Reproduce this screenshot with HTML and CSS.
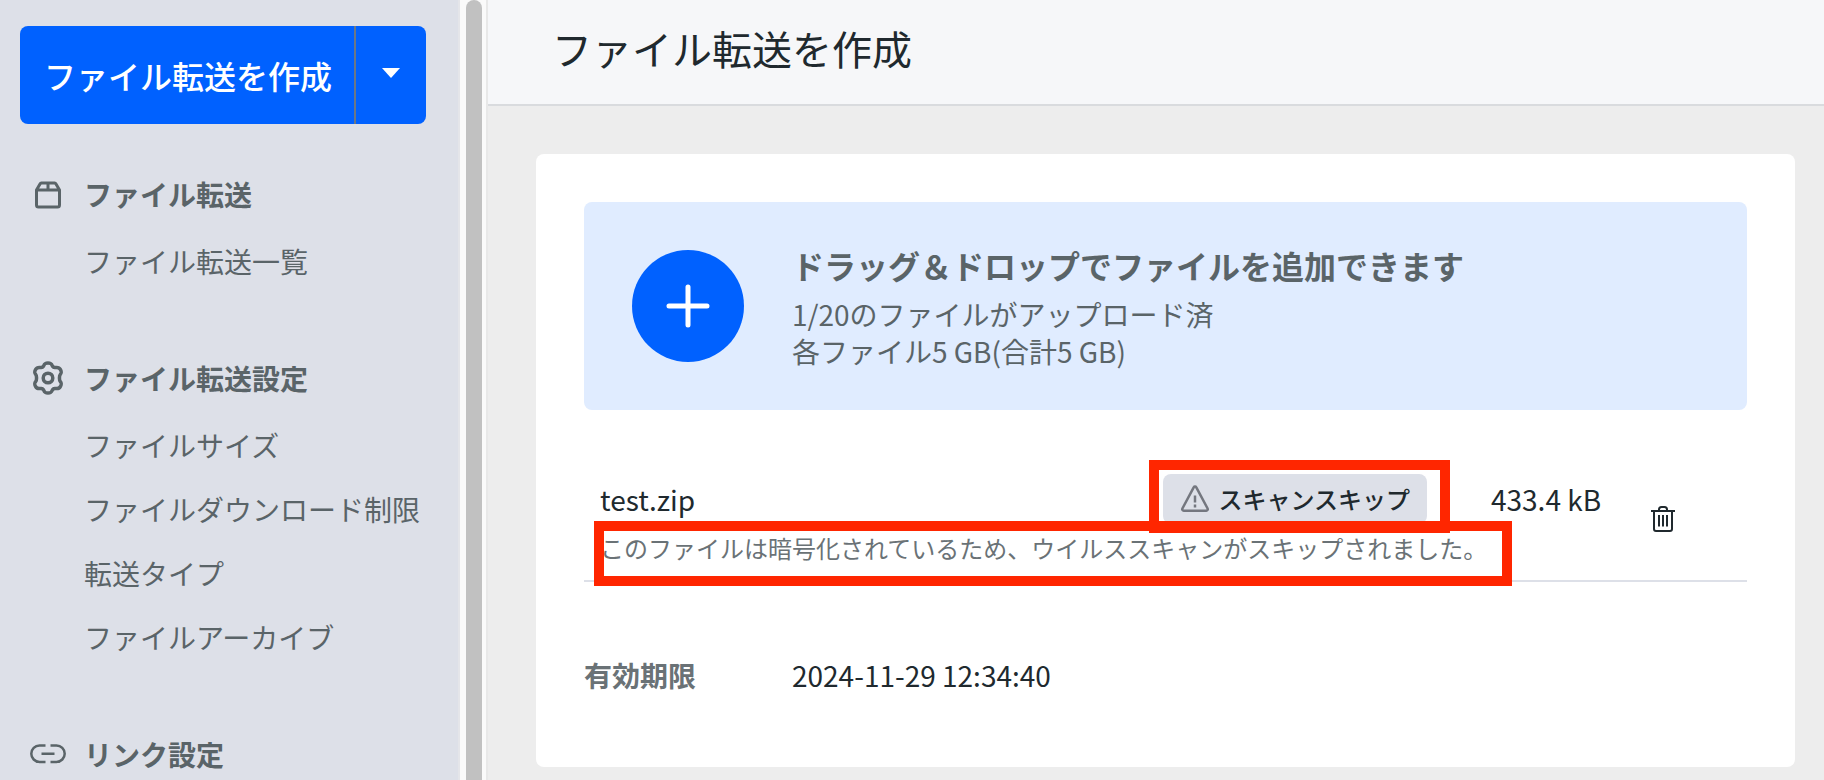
FILE: index.html
```html
<!DOCTYPE html>
<html lang="ja">
<head>
<meta charset="utf-8">
<title>ファイル転送を作成</title>
<link rel="stylesheet" href="styles.css">
</head>
<body>
<div class="app">
  <aside class="sidebar">
    <div class="split-button">
      <button class="split-main" type="button">ファイル転送を作成</button>
      <button class="split-toggle" type="button" aria-label="その他">
        <svg width="18" height="10" viewBox="0 0 18 10"><path d="M0 0h18L9 10z" fill="#fff"/></svg>
      </button>
    </div>
    <nav class="nav">
      <section class="nav-group">
        <h2 class="nav-heading">
          <svg class="nav-icon" width="36" height="36" viewBox="0 0 36 36" fill="none" stroke="#5a6468" stroke-width="3" stroke-linejoin="round"><path d="M6.500 14v15a2 2 0 0 0 2 2h19a2 2 0 0 0 2-2V14l-3.500-6a2 2 0 0 0-1.500-1H11.500a2 2 0 0 0-1.500 1zM6.500 14h23M18 7v7"/></svg>
          <span>ファイル転送</span>
        </h2>
        <a class="nav-link" href="#">ファイル転送一覧</a>
      </section>
      <section class="nav-group">
        <h2 class="nav-heading">
          <svg class="nav-icon" width="36" height="36" viewBox="0 0 36 36" fill="none" stroke="#5a6468" stroke-width="3.500" stroke-linejoin="round"><path d="M18 3c3 0 3.500.8 4.200 2.600.6 1.500 1.700 2.100 3.300 1.900 2-.3 3.600-.4 5 2.200s1 3.400-.3 4.900c-1 1.200-1 5.600 0 6.800 1.300 1.500 1.700 2.300.3 4.900s-3 2.500-5 2.200c-1.600-.2-2.700.4-3.300 1.900C21.500 32.200 21 33 18 33s-3.500-.8-4.200-2.600c-.6-1.500-1.700-2.100-3.300-1.900-2 .3-3.600.4-5-2.200s-1-3.400.3-4.900c1-1.200 1-5.600 0-6.800-1.300-1.500-1.700-2.300-.3-4.900s3-2.500 5-2.200c1.600.2 2.700-.4 3.300-1.900C14.500 3.800 15 3 18 3z"/><circle cx="18" cy="18" r="4.800"/></svg>
          <span>ファイル転送設定</span>
        </h2>
        <a class="nav-link" href="#">ファイルサイズ</a>
        <a class="nav-link" href="#">ファイルダウンロード制限</a>
        <a class="nav-link" href="#">転送タイプ</a>
        <a class="nav-link" href="#">ファイルアーカイブ</a>
      </section>
      <section class="nav-group">
        <h2 class="nav-heading">
          <svg class="nav-icon" width="36" height="36" viewBox="0 0 36 36" fill="none" stroke="#5a6468" stroke-width="2.500"><path d="M15.500 9.500H9.500a8.200 8.200 0 0 0 0 16.400h6M20.500 9.500h6a8.200 8.200 0 0 1 0 16.400h-6M11.500 17.700h13"/></svg>
          <span>リンク設定</span>
        </h2>
      </section>
    </nav>
  </aside>
  <div class="scroll-track"><div class="scroll-thumb"></div></div>
  <main class="main">
    <header class="page-header"><h1 class="page-title">ファイル転送を作成</h1></header>
    <div class="card">
      <div class="dropzone">
        <button class="add-button" type="button" aria-label="ファイルを追加">
          <svg width="44" height="44" viewBox="0 0 44 44" stroke="#fff" stroke-width="5" stroke-linecap="round"><path d="M22 3v38M3 22h38"/></svg>
        </button>
        <div class="dropzone-text">
          <p class="dropzone-title">ドラッグ＆ドロップでファイルを追加できます</p>
          <p class="dropzone-line">1/20のファイルがアップロード済</p>
          <p class="dropzone-line">各ファイル5 GB(合計5 GB)</p>
        </div>
      </div>
      <div class="file-row">
        <div class="file-info">
          <div class="file-top">
            <span class="file-name">test.zip</span>
            <div class="status">
              <span class="badge">
                <svg width="30" height="30" viewBox="0 0 30 30" fill="none" stroke="#74777f" stroke-width="2.500" stroke-linejoin="round"><path d="M13.700 3.300a1.500 1.500 0 0 1 2.600 0l11.300 21.200a1.500 1.500 0 0 1-1.300 2.200H3.700a1.500 1.500 0 0 1-1.300-2.200z"/><path d="M15 11.500v7M15 20.500v3"/></svg>
                <span>スキャンスキップ</span>
              </span>
            </div>
            <span class="file-size">433.4 kB</span>
          </div>
          <p class="file-note">このファイルは暗号化されているため、ウイルススキャンがスキップされました。</p>
        </div>
        <button class="delete-button" type="button" aria-label="削除">
          <svg width="26" height="28" viewBox="0 0 26 28" fill="none" stroke="#20292e" stroke-width="2"><path d="M1 6h24M9 6V4.500a2.500 2.500 0 0 1 2.500-2.500h3A2.500 2.500 0 0 1 17 4.500V6M4 6v18a2 2 0 0 0 2 2h14a2 2 0 0 0 2-2V6M9 10v11.500M13 10v11.500M17 10v11.500"/></svg>
        </button>
      </div>
      <dl class="details">
        <dt>有効期限</dt>
        <dd>2024-11-29 12:34:40</dd>
      </dl>
    </div>
  </main>
</div>
</body>
</html>
```
FILE: styles.css
```css
* {
  box-sizing: border-box;
}

body,
h1,
h2,
p,
dl,
dd {
  margin: 0;
}

body {
  background: #ededed;
  color: #20292e;
  font-family: "Noto Sans CJK JP", "Noto Sans", sans-serif;
  font-size: 28px;
  line-height: 36px;
}

button {
  border: 0;
  padding: 0;
  background: none;
  color: inherit;
  font: inherit;
}

svg {
  display: block;
  flex: none;
}

.app {
  display: flex;
  height: 100vh;
  overflow: hidden;
}

.sidebar {
  flex: 0 0 460px;
  padding: 26px 32px 0 20px;
  overflow: hidden;
  background: #dde0e8;
  border-right: 2px solid #e4e5e9;
}

.split-button {
  display: flex;
  height: 98px;
  border-radius: 8px;
  background: #0061ff;
  color: #fff;
}

.split-main {
  flex: 1;
  padding-left: 2px;
  font-size: 32px;
  font-weight: 500;
  white-space: nowrap;
}

.split-toggle {
  display: flex;
  align-items: center;
  justify-content: center;
  width: 72px;
  padding-bottom: 4px;
  border-left: 2px solid #6b7785;
}

.nav {
  display: flex;
  flex-direction: column;
  gap: 49px;
  padding-top: 34px;
  color: #5a6468;
}

.nav-group {
  display: flex;
  flex-direction: column;
}

.nav-heading {
  display: flex;
  align-items: center;
  gap: 18px;
  height: 71px;
  padding-left: 10px;
  font-size: 28px;
  font-weight: 700;
}

.nav-link {
  padding: 14px 0 14px 64px;
  color: inherit;
  text-decoration: none;
  white-space: nowrap;
}

.scroll-track {
  flex: 0 0 28px;
  padding: 0 4px 0 6px;
  background: #fafafa;
  border-right: 2px solid #e8e8e8;
}

.scroll-thumb {
  height: calc(100% + 16px);
  border-radius: 8px;
  background: #c1c1c1;
}

.main {
  flex: 1;
  min-width: 0;
}

.page-header {
  height: 106px;
  padding: 20px 64px;
  background: #f6f7f9;
  border-bottom: 2px solid #d9dbde;
}

.page-title {
  font-size: 40px;
  font-weight: 400;
  line-height: 56px;
}

.card {
  margin: 48px 29px 14px 48px;
  padding: 48px;
  border-radius: 8px;
  background: #fff;
}

.dropzone {
  display: flex;
  align-items: center;
  gap: 48px;
  padding: 40px 48px;
  border-radius: 8px;
  background: #e0ecff;
}

.add-button {
  display: flex;
  align-items: center;
  justify-content: center;
  width: 112px;
  height: 112px;
  border-radius: 50%;
  background: #0061ff;
}

.dropzone-text {
  color: #5a6468;
}

.dropzone-title {
  padding-bottom: 8px;
  font-size: 32px;
  font-weight: 700;
  line-height: 46px;
}

.dropzone-line {
  line-height: 37px;
}

.file-row {
  display: flex;
  align-items: center;
  margin-top: 48px;
  padding: 0 71px 0 16px;
  border-bottom: 2px solid #dde0e8;
}

.file-info {
  flex: 1;
  padding: 16px 0 13px;
}

.file-top {
  display: flex;
  align-items: center;
}

.file-name {
  flex: 1;
}

.status {
  position: relative;
  margin-right: 64px;
}

.badge {
  display: flex;
  align-items: center;
  gap: 8px;
  height: 50px;
  padding: 0 17px;
  border-radius: 8px;
  background: #dde0e8;
  font-size: 24px;
  font-weight: 500;
}

.file-size {
  width: 134px;
}

/* Callout frames around the scan status and its explanation */
.status::after,
.file-note::after {
  content: "";
  position: absolute;
  border: 10px solid #ff2600;
}

.status::after {
  inset: -14px -23px -9px -14px;
}

.file-note {
  position: relative;
  width: fit-content;
  margin-top: 5px;
  color: #6a7276;
  font-size: 24px;
  line-height: 38px;
}

.file-note::after {
  inset: -8px -25px -19px -6px;
}

.delete-button {
  display: flex;
  margin-left: 25px;
}

.details {
  display: grid;
  grid-template-columns: 208px 1fr;
  padding: 75px 0 26px;
}

.details dt {
  color: #6a7276;
  font-weight: 700;
}
```
